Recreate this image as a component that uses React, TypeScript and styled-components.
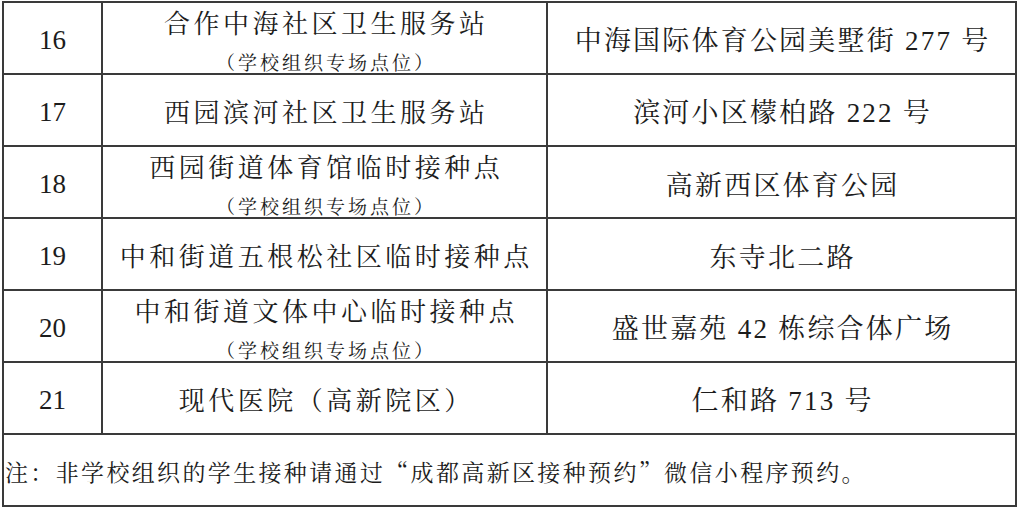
import styled, { createGlobalStyle } from "styled-components";

const GlobalStyle = createGlobalStyle`
    html, body {
        margin: 0;
        padding: 0;
        background: #ffffff;
    }
`;

interface Site {
    no: number;
    name: string;
    school?: boolean;
    address: string;
}

const sites: Site[] = [
    { no: 16, name: "合作中海社区卫生服务站", school: true, address: "中海国际体育公园美墅街 277 号" },
    { no: 17, name: "西园滨河社区卫生服务站", address: "滨河小区檬柏路 222 号" },
    { no: 18, name: "西园街道体育馆临时接种点", school: true, address: "高新西区体育公园" },
    { no: 19, name: "中和街道五根松社区临时接种点", address: "东寺北二路" },
    { no: 20, name: "中和街道文体中心临时接种点", school: true, address: "盛世嘉苑 42 栋综合体广场" },
    { no: 21, name: "现代医院（高新院区）", address: "仁和路 713 号" },
];

// digits in the source are set in a Times-like face, so split them out
const withDigits = (text: string) =>
    text.split(/(\d+)/).map((part, i) =>
        /^\d+$/.test(part) ? <Digits key={i}>{part}</Digits> : part
    );

const App = () => {
    return (
        <>
            <GlobalStyle />
            <Page>
                <Table>
                    <colgroup>
                        <col style={{ width: 99 }} />
                        <col style={{ width: 445 }} />
                        <col style={{ width: 469 }} />
                    </colgroup>
                    <tbody>
                        {sites.map((s) => (
                            <Row key={s.no}>
                                <NumCell>{s.no}</NumCell>
                                <NameCell $school={!!s.school}>
                                    <MainName>{s.name}</MainName>
                                    {s.school && <SubName>（学校组织专场点位）</SubName>}
                                </NameCell>
                                <AddrCell>{withDigits(s.address)}</AddrCell>
                            </Row>
                        ))}
                        <Row>
                            <NoteCell colSpan={3}>
                                注：非学校组织的学生接种请通过“成都高新区接种预约”微信小程序预约。
                            </NoteCell>
                        </Row>
                    </tbody>
                </Table>
            </Page>
        </>
    );
};
export default App;

const cjkStack = `"Noto Serif CJK SC", "Noto Sans CJK SC", serif`;
const latinStack = `"Liberation Serif", "Times New Roman", "DejaVu Serif", serif`;

const Page = styled.div`
    padding: 1px 0 0 2px;
    width: 1019px;
    height: 509px;
    box-sizing: border-box;
    overflow: hidden;
    color: #1c1c1c;
    font-family: ${cjkStack};
`;

const Table = styled.table`
    border-collapse: collapse;
    table-layout: fixed;
    width: 1014px;
    border: 2px solid #4a4a4a;
`;

const Row = styled.tr`
    height: 72px;
`;

const Cell = styled.td`
    border: 2px solid #3a3a3a;
    padding: 0;
    text-align: center;
    vertical-align: middle;
    white-space: nowrap;
`;

const Digits = styled.span`
    font-family: ${latinStack};
`;

const NumCell = styled(Cell)`
    font-family: ${latinStack};
    font-size: 27px;
    line-height: 30px;
    padding-top: 4px;
`;

const NameCell = styled(Cell)<{ $school: boolean }>`
    vertical-align: ${({ $school }) => ($school ? "top" : "middle")};
    padding-top: ${({ $school }) => ($school ? "1px" : "2px")};
`;

const MainName = styled.div`
    font-size: 26px;
    line-height: 36px;
    letter-spacing: 3.5px;
    padding-left: 3.5px;
`;

const SubName = styled.div`
    font-size: 19px;
    line-height: 20px;
    letter-spacing: 3px;
    padding-left: 3px;
    margin-top: 12px;
`;

const AddrCell = styled(Cell)`
    font-size: 27px;
    line-height: 36px;
    letter-spacing: 2.2px;
    padding-left: 2.2px;
    padding-top: 4px;
`;

const NoteCell = styled(Cell)`
    text-align: left;
    font-size: 23px;
    line-height: 32px;
    letter-spacing: 2.35px;
    padding: 4px 0 0 1px;
`;
